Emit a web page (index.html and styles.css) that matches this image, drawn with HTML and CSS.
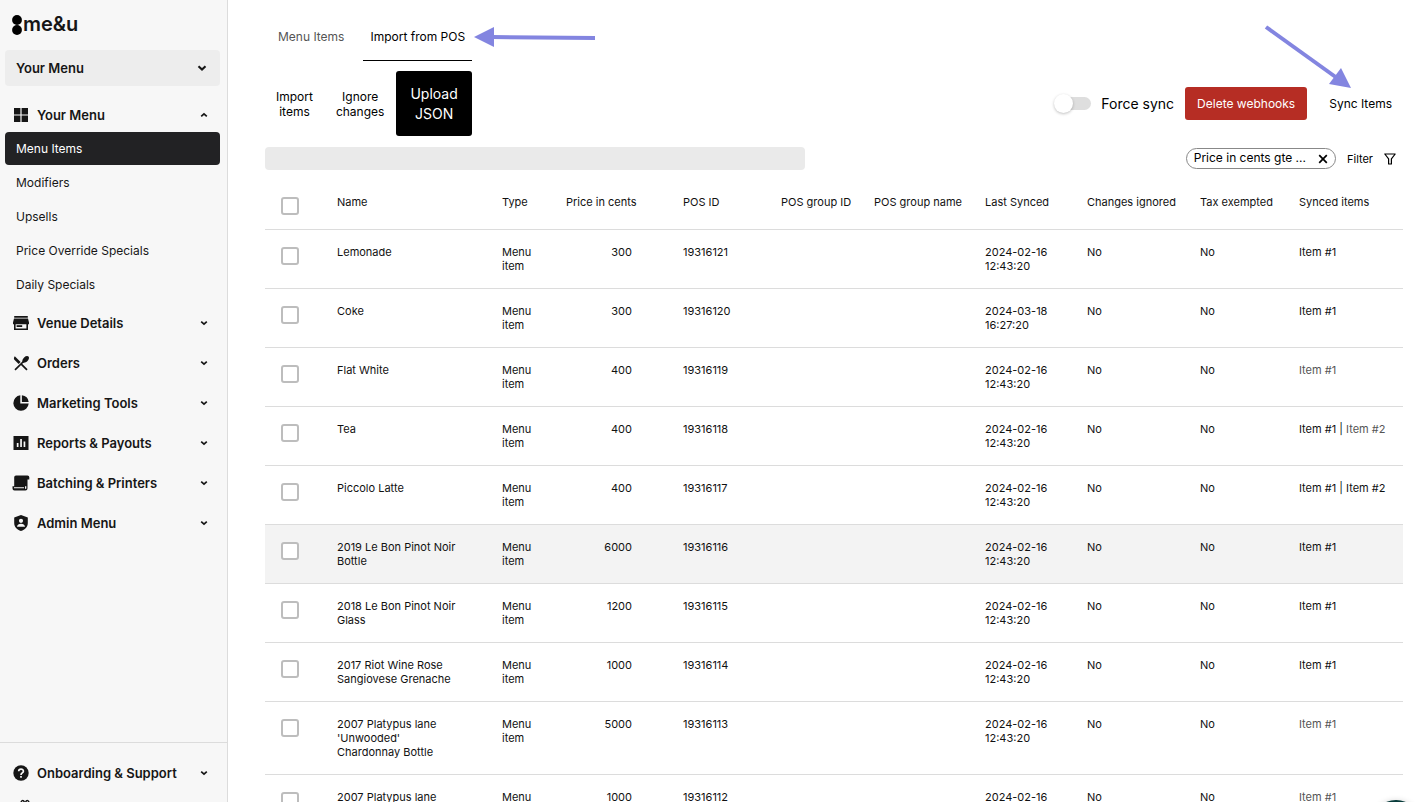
FILE: index.html
```html
<!DOCTYPE html>
<html lang="en">
<head>
<meta charset="utf-8">
<title>me&amp;u – Import from POS</title>
<link rel="stylesheet" href="styles.css">
</head>
<body>
<svg class="sprite" aria-hidden="true">
  <symbol id="chev" viewBox="0 0 8 8"><path d="M1.2 2.6 4 5.2 6.8 2.6" fill="none" stroke="currentColor" stroke-width="1.7"/></symbol>
</svg>
<div class="app">
  <aside class="sidebar">
    <a class="logo" href="#" aria-label="me&amp;u home">
      <svg width="10" height="20" viewBox="0 0 10 20"><circle cx="5" cy="5" r="4.9"/><circle cx="5" cy="15" r="4.9"/></svg>
      <span>me&amp;u</span>
    </a>
    <button class="venue"><span>Your Menu</span><svg class="chev-lg"><use href="#chev"/></svg></button>
    <nav class="nav">
      <button class="group open"><svg class="ico" viewBox="0 0 16 16"><path d="M1 1h6.4v6.4H1zM8.6 1H15v6.4H8.6zM1 8.6h6.4V15H1zM8.6 8.6H15V15H8.6z"/></svg><span>Your Menu</span><svg class="chev up"><use href="#chev"/></svg></button>
      <ul class="sub">
        <li><a class="active" href="#">Menu Items</a></li>
        <li><a href="#">Modifiers</a></li>
        <li><a href="#">Upsells</a></li>
        <li><a href="#">Price Override Specials</a></li>
        <li><a href="#">Daily Specials</a></li>
      </ul>
      <button class="group"><svg class="ico" viewBox="0 0 16 16"><path d="M1.2 1h13.6v1.8H1.2zM1 3.6h14l1 4v1.6h-1V15H1V9.200H0V7.600zM2.600 9.200v4.200h10.800V9.200z" fill-rule="evenodd"/><path d="M3.600 10.200h5.600v1.800H3.600z"/></svg><span>Venue Details</span><svg class="chev"><use href="#chev"/></svg></button>
      <button class="group"><svg class="ico" viewBox="0 0 16 16"><path d="M1.800 1.200 7.600 6.900 5.600 9 1.600 5C.600 3.900.700 2.300 1.800 1.200z"/><path d="M9.500 7.200c-.5-1.400.1-3.300 1.600-4.700 1.600-1.500 3.500-1.800 4.400-.9s.6 2.800-1 4.400c-1.400 1.400-3.300 2-4.700 1.400z"/><path d="M10.500 6.500 2 14.800M8 8.800l6 6" fill="none" stroke="currentColor" stroke-width="1.700"/></svg><span>Orders</span><svg class="chev"><use href="#chev"/></svg></button>
      <button class="group"><svg class="ico" viewBox="0 0 16 16"><path d="M7.300.300v8.300h8.400A7.700 7.700 0 1 1 7.300.300z"/><path d="M8.900.300a7.700 7.700 0 0 1 6.800 6.700H8.900z"/></svg><span>Marketing Tools</span><svg class="chev"><use href="#chev"/></svg></button>
      <button class="group"><svg class="ico" viewBox="0 0 16 16"><path d="M.500 1h15v14H.500zM3.800 8v4h1.700V8zM7.200 4v8h1.700V4zM10.600 6.500V12h1.700V6.500z" fill-rule="evenodd"/></svg><span>Reports &amp; Payouts</span><svg class="chev"><use href="#chev"/></svg></button>
      <button class="group"><svg class="ico" viewBox="0 0 16 16"><path d="M3 .5h11.500A1.800 1.800 0 0 1 16.300 2.300V4.500H14.500V13.500a2 2 0 0 1-2 2H1.500a2 2 0 0 1-2-2V11.300H1.200V2.300A1.800 1.800 0 0 1 3 .5zM1 12.300v.9h10v-.9zM12 11.300v2.200a.8.8 0 0 0 1.300 0v-2.200z" fill-rule="evenodd"/></svg><span>Batching &amp; Printers</span><svg class="chev"><use href="#chev"/></svg></button>
      <button class="group"><svg class="ico" viewBox="0 0 16 16"><path d="M8 0l6.800 2.500V8c0 4-2.800 6.800-6.800 8-4-1.200-6.800-4-6.800-8V2.500zM8 3.700a2.100 2.100 0 1 0 0 4.200 2.100 2.100 0 0 0 0-4.200zM4 11.800h8c-.2-1.900-1.800-3-4-3s-3.800 1.100-4 3z" fill-rule="evenodd"/></svg><span>Admin Menu</span><svg class="chev"><use href="#chev"/></svg></button>
    </nav>
    <div class="support">
      <button class="group"><svg class="ico" viewBox="0 0 16 16"><circle cx="8" cy="8" r="7.700"/><path d="M5.700 6.300C5.700 3.300 10.400 3.300 10.400 6.200 10.400 8 8 7.900 8 9.900M8 11v1.700" fill="none" stroke="#f7f7f7" stroke-width="1.700"/></svg><span>Onboarding &amp; Support</span><svg class="chev"><use href="#chev"/></svg></button>
      <a class="news" href="#"><svg class="ico" viewBox="0 0 16 16"><path d="M1 5h14v10H1zM8 5C7 0 3 1 4.500 5M8 5c1-5 5-4 3.500 0M8 5v10" fill="none" stroke="currentColor" stroke-width="1.500"/></svg><span>What's new</span></a>
    </div>
  </aside>

  <main class="main">
    <nav class="tabs"><a href="#">Menu Items</a><a class="current" href="#">Import from POS</a></nav>
    <div class="actions">
      <button class="text-btn">Import<br>items</button>
      <button class="text-btn">Ignore<br>changes</button>
      <button class="upload">Upload<br>JSON</button>
      <label class="switch"><input type="checkbox" role="switch"><span>Force sync</span></label>
      <button class="danger">Delete webhooks</button>
      <button class="sync">Sync Items</button>
    </div>
    <div class="filters">
      <div class="search"></div>
      <div class="chip"><span>Price in cents gte ...</span><button aria-label="Remove filter"><svg width="10" height="10" viewBox="0 0 10 10"><path d="M1.200 1.200l7.600 7.600M8.800 1.200 1.200 8.800" stroke="#000" stroke-width="1.700"/></svg></button></div>
      <button class="filter">Filter<svg width="12" height="12" viewBox="0 0 12 12"><path d="M.8 1h10.400L7.400 5.800V11H4.600V5.800z" fill="none" stroke="#000" stroke-width="1.200" stroke-linejoin="round"/></svg></button>
    </div>
    <table class="grid">
      <colgroup><col class="c-check"><col><col class="c-type"><col class="c-price"><col class="c-pos"><col class="c-gid"><col class="c-gname"><col class="c-last"><col class="c-chg"><col class="c-tax"><col class="c-items"></colgroup>
      <thead><tr><th><input type="checkbox" aria-label="Select all"></th><th>Name</th><th>Type</th><th class="num">Price in cents</th><th>POS ID</th><th>POS group ID</th><th>POS group name</th><th>Last Synced</th><th>Changes ignored</th><th>Tax exempted</th><th>Synced items</th></tr></thead>
      <tbody>
        <tr><td><input type="checkbox" aria-label="Select Lemonade"></td><td>Lemonade</td><td>Menu item</td><td class="num">300</td><td>19316121</td><td></td><td></td><td>2024-02-16 12:43:20</td><td>No</td><td>No</td><td>Item #1</td></tr>
        <tr><td><input type="checkbox" aria-label="Select Coke"></td><td>Coke</td><td>Menu item</td><td class="num">300</td><td>19316120</td><td></td><td></td><td>2024-03-18 16:27:20</td><td>No</td><td>No</td><td>Item #1</td></tr>
        <tr><td><input type="checkbox" aria-label="Select Flat White"></td><td>Flat White</td><td>Menu item</td><td class="num">400</td><td>19316119</td><td></td><td></td><td>2024-02-16 12:43:20</td><td>No</td><td>No</td><td><span class="dim">Item #1</span></td></tr>
        <tr><td><input type="checkbox" aria-label="Select Tea"></td><td>Tea</td><td>Menu item</td><td class="num">400</td><td>19316118</td><td></td><td></td><td>2024-02-16 12:43:20</td><td>No</td><td>No</td><td>Item #1 | <span class="dim">Item #2</span></td></tr>
        <tr><td><input type="checkbox" aria-label="Select Piccolo Latte"></td><td>Piccolo Latte</td><td>Menu item</td><td class="num">400</td><td>19316117</td><td></td><td></td><td>2024-02-16 12:43:20</td><td>No</td><td>No</td><td>Item #1 | Item #2</td></tr>
        <tr class="hover"><td><input type="checkbox" aria-label="Select 2019 Le Bon Pinot Noir Bottle"></td><td>2019 Le Bon Pinot Noir Bottle</td><td>Menu item</td><td class="num">6000</td><td>19316116</td><td></td><td></td><td>2024-02-16 12:43:20</td><td>No</td><td>No</td><td>Item #1</td></tr>
        <tr><td><input type="checkbox" aria-label="Select 2018 Le Bon Pinot Noir Glass"></td><td>2018 Le Bon Pinot Noir Glass</td><td>Menu item</td><td class="num">1200</td><td>19316115</td><td></td><td></td><td>2024-02-16 12:43:20</td><td>No</td><td>No</td><td>Item #1</td></tr>
        <tr><td><input type="checkbox" aria-label="Select 2017 Riot Wine Rose Sangiovese Grenache"></td><td>2017 Riot Wine Rose Sangiovese Grenache</td><td>Menu item</td><td class="num">1000</td><td>19316114</td><td></td><td></td><td>2024-02-16 12:43:20</td><td>No</td><td>No</td><td>Item #1</td></tr>
        <tr><td><input type="checkbox" aria-label="Select 2007 Platypus lane Chardonnay Bottle"></td><td>2007 Platypus lane 'Unwooded' Chardonnay Bottle</td><td>Menu item</td><td class="num">5000</td><td>19316113</td><td></td><td></td><td>2024-02-16 12:43:20</td><td>No</td><td>No</td><td><span class="dim">Item #1</span></td></tr>
        <tr><td><input type="checkbox" aria-label="Select 2007 Platypus lane"></td><td>2007 Platypus lane</td><td>Menu item</td><td class="num">1000</td><td>19316112</td><td></td><td></td><td>2024-02-16 12:43:20</td><td>No</td><td>No</td><td><span class="dim">Item #1</span></td></tr>
      </tbody>
    </table>
    <svg class="arrow arrow-tab" viewBox="0 0 121 20" aria-hidden="true"><path d="M0 10 20 0V20z"/><path d="M18 10 121 11" stroke-width="4"/></svg>
    <svg class="arrow arrow-sync" viewBox="0 0 90 66" aria-hidden="true"><path d="M87 63 65 59 77 43z"/><path d="M2 2 73 53" stroke-width="4"/></svg>
  </main>
</div>
<button class="launcher" aria-label="Open chat"></button>
</body>
</html>
```
FILE: styles.css
```css
* { box-sizing: border-box; }
body {
  margin: 0;
  font-family: Inter, "Liberation Sans", sans-serif;
  font-size: 12px;
  color: #000;
  background: #fff;
}
button { font: inherit; color: inherit; background: none; border: 0; padding: 0; cursor: pointer; }
a { color: inherit; text-decoration: none; }
.sprite { display: none; }
.app { display: flex; height: 100vh; overflow: hidden; }

.sidebar {
  flex: none;
  width: 228px;
  display: flex;
  flex-direction: column;
  overflow: hidden;
  background: #f7f7f7;
  border-right: 1px solid #dcdcdc;
  color: #161616;
}
.logo { display: flex; align-items: center; gap: 1px; height: 50px; padding-left: 12px; font-size: 20px; font-weight: 600; line-height: 22px; }
.logo span { padding-bottom: 2px; }
.venue {
  display: flex;
  flex: none;
  align-items: center;
  justify-content: space-between;
  height: 36px;
  margin: 0 7px 10px 5px;
  padding: 0 13px 0 11px;
  border-radius: 4px;
  background: #ededed;
  font-size: 13px;
  font-weight: 600;
}
.chev-lg { width: 10px; height: 10px; }
.chev { width: 8px; height: 8px; }
.up { transform: rotate(180deg); }
.group { display: flex; align-items: center; width: 100%; height: 40px; padding: 0 19px 0 13px; font-size: 13px; font-weight: 600; text-align: left; }
.open { height: 36px; padding-top: 2px; }
.group span { flex: 1; }
.ico { width: 16px; height: 16px; margin-right: 8px; fill: currentColor; overflow: visible; }
.sub { list-style: none; margin: 0; padding: 0 7px 1px 5px; }
.sub a { display: flex; align-items: center; height: 33px; margin-bottom: 1px; padding-left: 11px; border-radius: 4px; }
.sub .active { background: #222224; color: #fff; }
.support { flex: none; height: 60px; margin-top: auto; padding-top: 10px; border-top: 1px solid #dcdcdc; overflow: hidden; }
.news { display: flex; align-items: center; height: 28px; padding-left: 17px; color: #161616; }
.news span { opacity: .3; }

.main { position: relative; flex: 1; min-width: 0; overflow: hidden; padding: 12px 13px 0 37px; }
.tabs { display: flex; gap: 12px; padding-left: 6px; }
.tabs a { height: 49px; padding: 0 7px; line-height: 49px; color: #555; }
.tabs .current { color: #000; border-bottom: 1px solid #000; }
.actions { display: flex; align-items: center; gap: 11px; margin-top: 10px; }
.text-btn { padding: 0 1px 0 11px; line-height: 15px; }
.upload { height: 65px; padding: 0 14px; border-radius: 3px; background: #000; color: #fff; font-size: 14px; line-height: 20px; }
.switch { display: flex; align-items: center; gap: 10px; margin-left: auto; font-size: 14px; }
.switch input { appearance: none; position: relative; width: 35px; height: 13px; margin: 0; border-radius: 7px; background: #dedede; }
.switch input::before { content: ""; position: absolute; left: -2px; top: -3px; width: 19px; height: 19px; border-radius: 50%; background: #fff; box-shadow: 0 1px 3px rgba(0, 0, 0, .25); }
.danger { height: 33px; padding: 0 12px; border-radius: 3px; background: #b62d24; color: #fff; }
.sync { padding: 0 11px; }
.filters { display: flex; align-items: center; gap: 11px; margin-top: 11px; }
.search { width: 540px; height: 23px; margin-right: auto; border-radius: 4px; background: #eaeaea; }
.chip { display: flex; align-items: center; gap: 12px; height: 21px; padding: 0 7px 2px 7px; border: 1px solid #888; border-radius: 11px; }
.chip button { display: flex; padding-top: 2px; }
.filter { display: flex; align-items: center; gap: 11px; padding-right: 7px; font-size: 11px; }

.grid { width: 100%; border-collapse: separate; border-spacing: 0; table-layout: fixed; font-size: 11px; line-height: 14px; color: #111; }
.grid th, .grid td { padding: 15px 16px; vertical-align: top; text-align: left; font-weight: 400; border-bottom: 1px solid #dcdcdc; }
.grid th { padding-top: 25px; padding-bottom: 14px; white-space: nowrap; }
.grid td:nth-child(2) { padding-right: 24px; }
.grid .num { padding-right: 35px; text-align: right; }
.grid td:last-child { padding-right: 0; white-space: nowrap; }
.grid input { appearance: none; display: block; width: 18px; height: 18px; margin: 2px 0 0; border: 2px solid #bdbdbd; border-radius: 3px; background: #fff; }
.hover td { background: #f3f3f3; }
.dim { color: #555; }
.c-check { width: 56px; }
.c-type { width: 64px; }
.c-price { width: 117px; }
.c-pos { width: 98px; }
.c-gid { width: 93px; }
.c-gname { width: 111px; }
.c-last { width: 102px; }
.c-chg { width: 113px; }
.c-tax { width: 99px; }
.c-items { width: 120px; }

.arrow { position: absolute; fill: #8385e0; stroke: #8385e0; stroke-width: 0; pointer-events: none; }
.arrow-tab { left: 246px; top: 27px; width: 121px; height: 20px; }
.arrow-sync { right: 62px; top: 25px; width: 90px; height: 66px; }
.launcher { position: fixed; right: -4px; bottom: -46px; width: 48px; height: 48px; border-radius: 50%; background: #073b3a; box-shadow: 0 1px 6px rgba(0, 0, 0, .2); }
```
